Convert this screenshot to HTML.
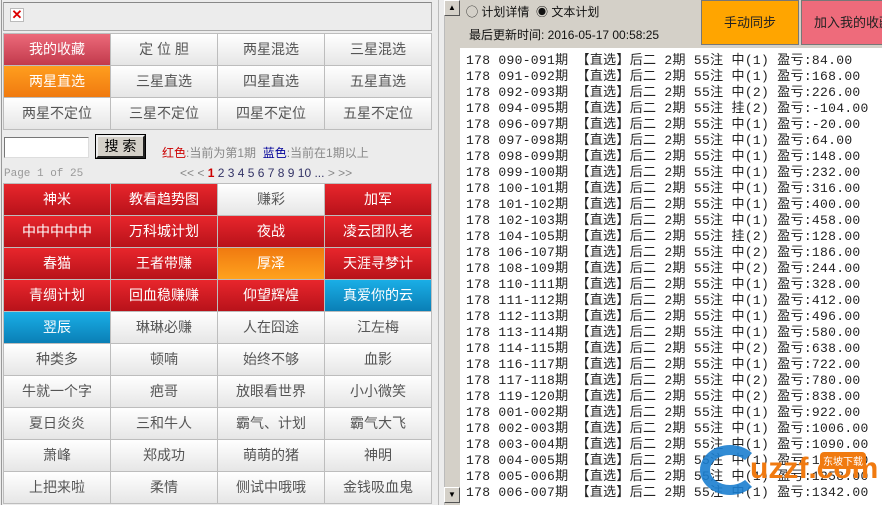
<!DOCTYPE html>
<html><head><meta charset="utf-8"><style>
*{margin:0;padding:0;box-sizing:border-box}
body{width:882px;height:505px;overflow:hidden;background:#ececec;font-family:"Liberation Sans","Noto Sans CJK SC",sans-serif;position:relative}
.abs{position:absolute}
.grid{position:absolute;left:3px;display:grid;grid-template-columns:repeat(4,106px);gap:1px;background:#bdbdbd;padding:1px}
.grid div{height:31px;line-height:31px;text-align:center;font-size:14px;color:#555;background:linear-gradient(#fff,#e6e6e6)}
.r{background:linear-gradient(#e8262c,#b8121a)!important;color:#fff!important}
.o{background:linear-gradient(#ff9e1e,#f07a10)!important;color:#fff!important}
.o2{background:linear-gradient(#f07a10,#ffa21e)!important;color:#fff!important}
.p{background:linear-gradient(#ec6a7a,#c23a4c)!important;color:#fff!important}
.b{background:linear-gradient(#1aaee6,#0a7fb6)!important;color:#fff!important}
.txt{position:absolute;left:460px;top:48px;width:422px;height:457px;background:#fff;font-family:"Liberation Mono","Noto Sans CJK SC",monospace;font-size:13px;color:#222;padding:5px 0 0 6px;line-height:16px;white-space:pre;overflow:hidden;letter-spacing:0.3px}
</style></head><body>
<div class="abs" style="left:1px;top:0;width:438px;height:505px;border-left:1px solid #999;border-right:1px solid #bbb;background:#ececec"></div>
<div class="abs" style="left:3px;top:2px;width:429px;height:29px;border:1px solid #aaa;border-top-color:#888;background:#ececec"></div>
<div class="abs" style="left:10px;top:8px;width:14px;height:14px;border:1px solid #bbb;background:#fff;color:#d00;font-size:13px;line-height:12px;text-align:center;font-weight:bold">✕</div>
<div class="grid" style="top:33px">
<div class="p">我的收藏</div><div>定 位 胆</div><div>两星混选</div><div>三星混选</div>
<div class="o">两星直选</div><div>三星直选</div><div>四星直选</div><div>五星直选</div>
<div>两星不定位</div><div>三星不定位</div><div>四星不定位</div><div>五星不定位</div>
</div>
<div class="abs" style="left:4px;top:137px;width:85px;height:21px;border:1px solid #777;border-right-color:#ddd;border-bottom-color:#ddd;background:#fff"></div>
<div class="abs" style="left:96px;top:135px;width:49px;height:23px;border:2px solid #222;border-top-color:#eee;border-left-color:#eee;background:#d4d0c8;font-size:14px;text-align:center;line-height:18px;outline:1px solid #000">搜 索</div>
<div class="abs" style="left:162px;top:144px;font-size:12px;color:#888"><span style="color:#c00">红色</span>:当前为第1期 &nbsp;<span style="color:#009">蓝色</span>:当前在1期以上</div>
<div class="abs" style="left:4px;top:168px;font-size:11px;color:#999;font-family:'Liberation Mono',monospace">Page 1 of 25</div>
<div class="abs" style="left:180px;top:166px;font-size:12px;color:#336"><span style="color:#888">&lt;&lt; &lt;</span> <b style="color:#c00">1</b> 2 3 4 5 6 7 8 9 10 ... <span style="color:#888">&gt; &gt;&gt;</span></div>
<div class="grid" style="top:183px">
<div class="r">神米</div><div class="r">教看趋势图</div><div>赚彩</div><div class="r">加军</div>
<div class="r">中中中中中</div><div class="r">万科城计划</div><div class="r">夜战</div><div class="r">凌云团队老</div>
<div class="r">春猫</div><div class="r">王者带赚</div><div class="o2">厚泽</div><div class="r">天涯寻梦计</div>
<div class="r">青绸计划</div><div class="r">回血稳赚赚</div><div class="r">仰望辉煌</div><div class="b">真爱你的云</div>
<div class="b">翌辰</div><div>琳琳必赚</div><div>人在囧途</div><div>江左梅</div>
<div>种类多</div><div>顿喃</div><div>始终不够</div><div>血影</div>
<div>牛就一个字</div><div>疤哥</div><div>放眼看世界</div><div>小小微笑</div>
<div>夏日炎炎</div><div>三和牛人</div><div>霸气、计划</div><div>霸气大飞</div>
<div>萧峰</div><div>郑成功</div><div>萌萌的猪</div><div>神明</div>
<div>上把来啦</div><div>柔情</div><div>侧试中哦哦</div><div>金钱吸血鬼</div>
</div>
<div class="abs" style="left:444px;top:0;width:16px;height:505px;background:#d4d0c8;border-left:1px solid #bbb"></div>
<div class="abs" style="left:444px;top:0;width:16px;height:16px;background:#d4d0c8;border:1px solid #fff;border-right-color:#555;border-bottom-color:#555;font-size:8px;text-align:center;line-height:13px">▲</div>
<div class="abs" style="left:444px;top:487px;width:16px;height:16px;background:#d4d0c8;border:1px solid #fff;border-right-color:#555;border-bottom-color:#555;font-size:8px;text-align:center;line-height:13px">▼</div>
<div class="abs" style="left:460px;top:0;width:422px;height:48px;background:#d4d0c8"></div>
<div class="abs" style="left:466px;top:3px;font-size:12px;color:#111">◯ 计划详情 &nbsp;◉ 文本计划</div>
<div class="abs" style="left:469px;top:26px;font-size:12px;color:#111">最后更新时间: 2016-05-17 00:58:25</div>
<div class="abs" style="left:701px;top:0;width:98px;height:45px;background:#ffa500;border:1px solid #777;font-size:13px;text-align:center;line-height:43px;color:#222">手动同步</div>
<div class="abs" style="left:801px;top:0;width:90px;height:45px;background:#ee6b7b;border:1px solid #777;font-size:13px;line-height:43px;padding-left:12px;color:#222;white-space:nowrap">加入我的收藏</div>
<div class="txt">178 090-091期 【直选】后二 2期 55注 中(1) 盈亏:84.00
178 091-092期 【直选】后二 2期 55注 中(1) 盈亏:168.00
178 092-093期 【直选】后二 2期 55注 中(2) 盈亏:226.00
178 094-095期 【直选】后二 2期 55注 挂(2) 盈亏:-104.00
178 096-097期 【直选】后二 2期 55注 中(1) 盈亏:-20.00
178 097-098期 【直选】后二 2期 55注 中(1) 盈亏:64.00
178 098-099期 【直选】后二 2期 55注 中(1) 盈亏:148.00
178 099-100期 【直选】后二 2期 55注 中(1) 盈亏:232.00
178 100-101期 【直选】后二 2期 55注 中(1) 盈亏:316.00
178 101-102期 【直选】后二 2期 55注 中(1) 盈亏:400.00
178 102-103期 【直选】后二 2期 55注 中(1) 盈亏:458.00
178 104-105期 【直选】后二 2期 55注 挂(2) 盈亏:128.00
178 106-107期 【直选】后二 2期 55注 中(2) 盈亏:186.00
178 108-109期 【直选】后二 2期 55注 中(2) 盈亏:244.00
178 110-111期 【直选】后二 2期 55注 中(1) 盈亏:328.00
178 111-112期 【直选】后二 2期 55注 中(1) 盈亏:412.00
178 112-113期 【直选】后二 2期 55注 中(1) 盈亏:496.00
178 113-114期 【直选】后二 2期 55注 中(1) 盈亏:580.00
178 114-115期 【直选】后二 2期 55注 中(2) 盈亏:638.00
178 116-117期 【直选】后二 2期 55注 中(1) 盈亏:722.00
178 117-118期 【直选】后二 2期 55注 中(2) 盈亏:780.00
178 119-120期 【直选】后二 2期 55注 中(2) 盈亏:838.00
178 001-002期 【直选】后二 2期 55注 中(1) 盈亏:922.00
178 002-003期 【直选】后二 2期 55注 中(1) 盈亏:1006.00
178 003-004期 【直选】后二 2期 55注 中(1) 盈亏:1090.00
178 004-005期 【直选】后二 2期 55注 中(1) 盈亏:1174.00
178 005-006期 【直选】后二 2期 55注 中(1) 盈亏:1258.00
178 006-007期 【直选】后二 2期 55注 中(1) 盈亏:1342.00</div>
<div class="abs" style="left:700px;top:445px;width:60px;height:50px;border-radius:50%;border:10px solid #1b7fd0;border-right-color:transparent;opacity:.9"></div>
<div class="abs" style="left:750px;top:452px;font-size:30px;font-weight:bold;color:#f07a10;font-family:'Liberation Sans',sans-serif">uzzf.com</div>
<div class="abs" style="left:820px;top:452px;font-size:10px;color:#fff;background:#f07a10;padding:1px 3px;border-radius:4px">东坡下载</div>
</body></html>
